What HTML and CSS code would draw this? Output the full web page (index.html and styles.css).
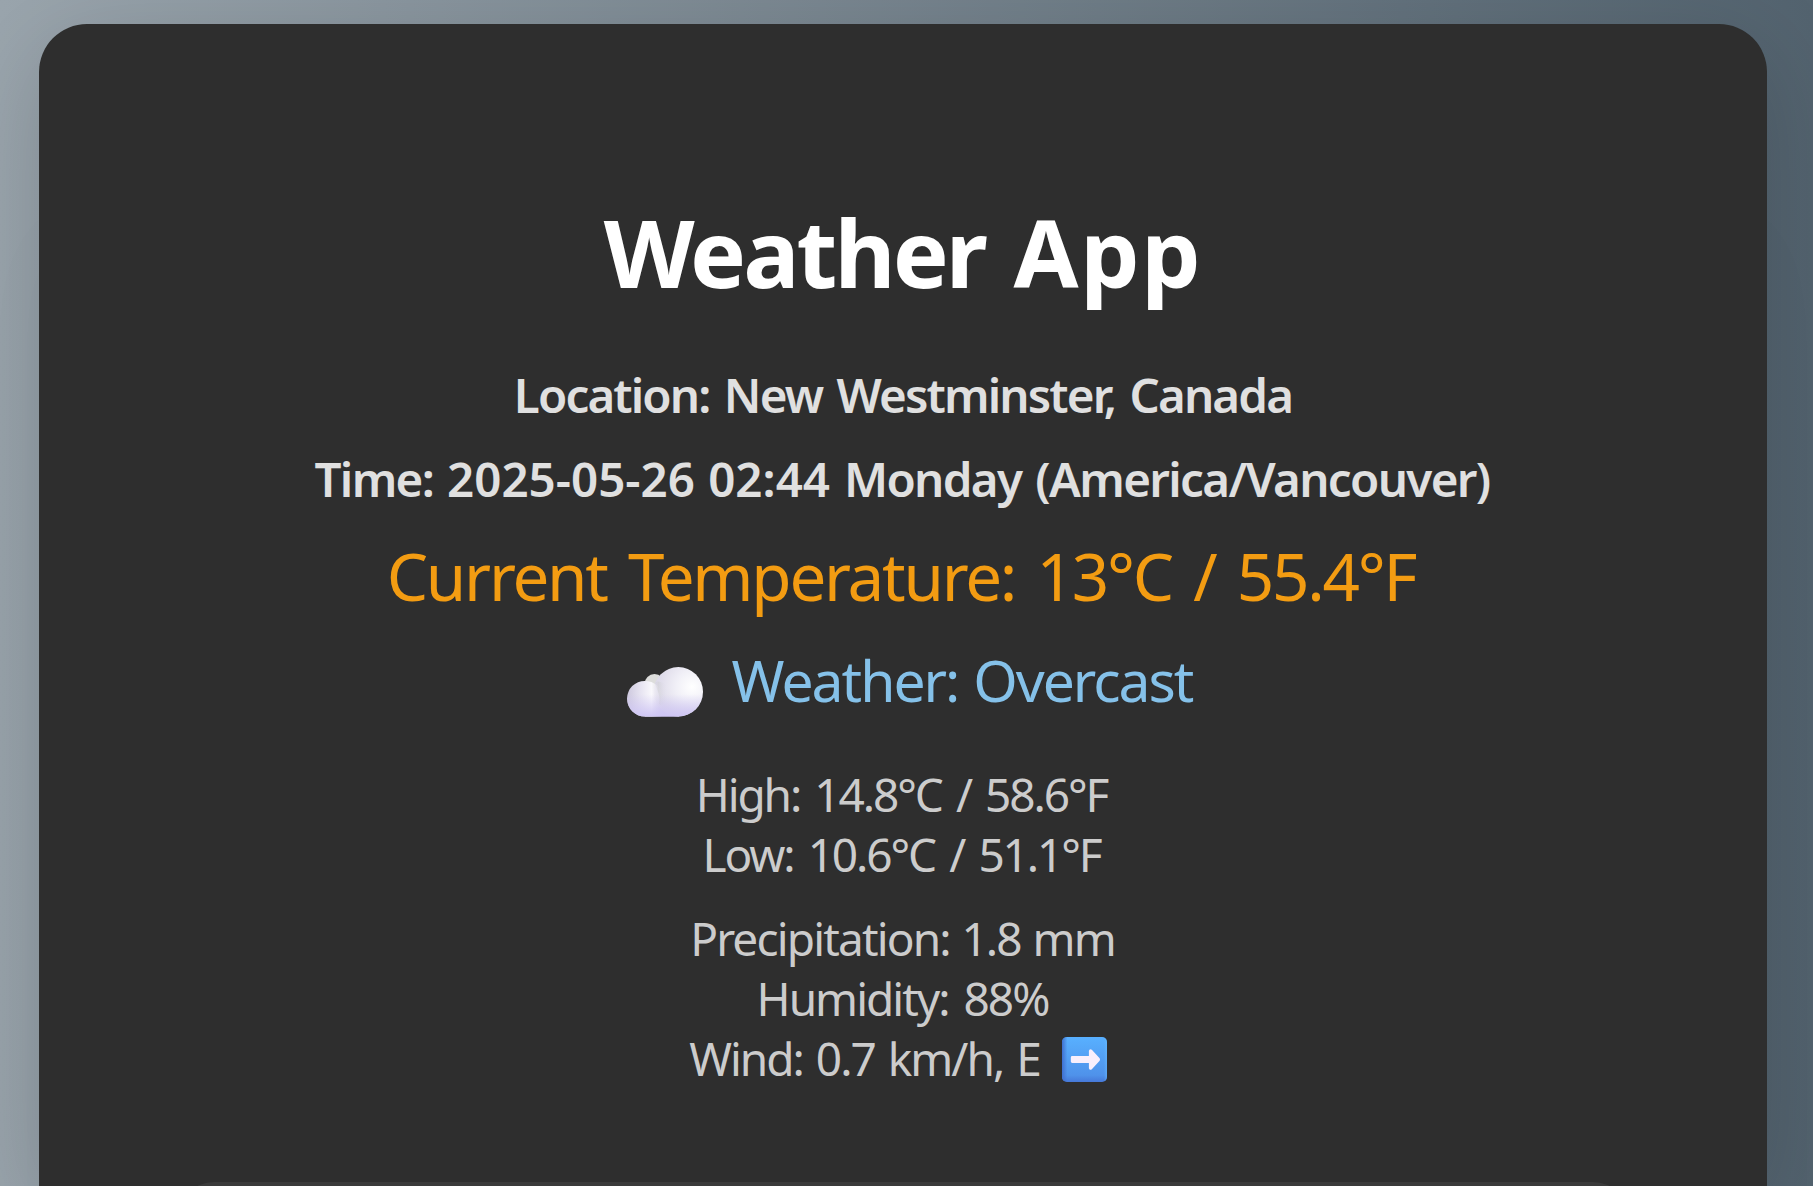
FILE: index.html
```html
<!DOCTYPE html>
<html lang="en">
<head>
<meta charset="utf-8">
<title>Weather App</title>
<link rel="stylesheet" href="styles.css">
</head>
<body>
<main class="card">
  <h1 class="title">Weather <span class="app">App</span></h1>
  <p class="location">Location: New Westminster, Canada</p>
  <p class="time">Time: <span class="digits">2025-05-26 02:44</span> Monday (America/Vancouver)</p>
  <p class="temperature">Current Temperature: 13°C / 55.4°F</p>
  <div class="conditions">
    <svg class="cloud" viewBox="0 0 76 50" aria-hidden="true">
      <defs>
        <linearGradient id="base" x1="0" y1="0" x2="0" y2="1">
          <stop offset="0" stop-color="#e2e2e4"/><stop offset=".5" stop-color="#e2dfef"/><stop offset="1" stop-color="#cdc4f0"/>
        </linearGradient>
        <radialGradient id="big" cx=".78" cy=".4" r=".8">
          <stop offset="0" stop-color="#fff"/><stop offset=".4" stop-color="#f1f0f7"/><stop offset=".8" stop-color="#e0ddeb"/><stop offset="1" stop-color="#dad6e8"/>
        </radialGradient>
        <linearGradient id="small" x1="0" y1="0" x2="1" y2="0">
          <stop offset="0" stop-color="#cdc8de"/><stop offset=".35" stop-color="#e5e2f0"/><stop offset=".68" stop-color="#f9f8fc"/><stop offset="1" stop-color="#e4e2ec" stop-opacity="0"/>
        </linearGradient>
        <linearGradient id="fade" x1="0" y1="0" x2="0" y2="1">
          <stop offset=".55" stop-color="#cfc6f4" stop-opacity="0"/><stop offset="1" stop-color="#cfc6f4"/>
        </linearGradient>
        <linearGradient id="crease" x1="0" y1="0" x2="1" y2="0">
          <stop offset="0" stop-color="#d2d2d4" stop-opacity="0"/><stop offset=".35" stop-color="#d2d2d6"/><stop offset="1" stop-color="#e4e2ee" stop-opacity="0"/>
        </linearGradient>
      </defs>
      <circle cx="27.500" cy="17" r="10" fill="#dddddc"/>
      <path d="M18 49.500V30L32 16H52V49.500Z" fill="url(#base)"/>
      <circle cx="51.300" cy="24.700" r="24.700" fill="url(#big)"/>
      <path d="M17.800 13.900C27 13.900 35 20 36 30 36.500 38 36 49.500 34 49.500H17.800A17.800 17.800 0 0 1 17.800 13.900Z" fill="url(#small)"/>
      <path d="M27 16Q31 12 40 18V36Q36 41 32 37 34 27 27 16Z" fill="url(#crease)" opacity=".6"/>
      <path d="M17.800 13.900C25 13.900 29 17 32 22 36 7 43 0 51.300 0A24.700 24.700 0 0 1 51.300 49.500H17.800A17.800 17.800 0 0 1 17.800 13.900Z" fill="url(#fade)"/>
    </svg>
    <span class="summary">Weather: Overcast</span>
  </div>
  <div class="details range">
    <p class="high">High: 14.8°C / 58.6°F</p>
    <p class="low">Low: 10.6°C / 51.1°F</p>
  </div>
  <div class="details extra">
    <p class="precipitation">Precipitation: 1.8 mm</p>
    <p class="humidity">Humidity: 88%</p>
    <p class="wind"><span>Wind: 0.7 km/h, E</span>
      <svg class="arrow" viewBox="0 0 46 46" aria-hidden="true">
        <defs>
          <linearGradient id="tile" x1="0" y1="0" x2="0" y2="1">
            <stop offset="0" stop-color="#58b0ff"/><stop offset=".85" stop-color="#4f92ea"/><stop offset="1" stop-color="#4678d8"/>
          </linearGradient>
          <linearGradient id="edge" x1="0" y1="0" x2="1" y2="0">
            <stop offset="0" stop-color="#3f6fd0"/><stop offset=".12" stop-color="#3f6fd0" stop-opacity="0"/><stop offset=".93" stop-color="#69bcff" stop-opacity="0"/><stop offset="1" stop-color="#69bcff" stop-opacity=".5"/>
          </linearGradient>
        </defs>
        <rect width="46" height="46" rx="5" fill="url(#tile)"/>
        <rect width="46" height="46" rx="5" fill="url(#edge)"/>
        <path d="M10.500 19.500H27.500V14Q28.200 11.500 30.500 13L38.500 21.800Q39.200 23 38.500 24.200L30.500 33Q28.200 34.500 27.500 32V26.500H10.500Q9 26.500 9 25V21Q9 19.500 10.500 19.500Z" fill="#f8effc"/>
      </svg>
    </p>
  </div>
  <section class="forecast"></section>
</main>
</body>
</html>
```
FILE: styles.css
```css
* { box-sizing: border-box; }
html { height: 100%; overflow: hidden; }
body {
  margin: 0;
  height: 100%;
  overflow: hidden;
  padding: 24px 46px 0 39px;
  background: linear-gradient(90deg, #9aa5ad, #53636f);
  font-family: "Noto Sans", "Open Sans", sans-serif;
  text-align: center;
}
p, h1 { margin: 0; white-space: nowrap; }
.card {
  height: 1162px;
  overflow: hidden;
  padding: 167px 138.500px 0;
  border-radius: 48px 48px 0 0;
  background: #2e2e2e;
  box-shadow: 0 24px 96px rgba(0, 0, 0, .16), 0 200px 96px rgba(0, 0, 0, .02);
}
.title {
  height: 168px;
  line-height: 122px;
  font-size: 94px;
  font-weight: 700;
  letter-spacing: -2.900px;
  word-spacing: 7px;
  color: #fff;
}
.app { letter-spacing: 1.600px; }
.location, .time {
  height: 84px;
  line-height: 72px;
  font-size: 47.500px;
  font-weight: 600;
  color: #e0e0e0;
}
.location { letter-spacing: -1.850px; word-spacing: 3.800px; }
.time { padding-right: 2px; letter-spacing: -1.650px; word-spacing: 3.200px; }
.digits { letter-spacing: 0; word-spacing: 1px; }
.temperature {
  height: 112px;
  padding-right: 4px;
  line-height: 98px;
  font-size: 65.500px;
  letter-spacing: -2.250px;
  word-spacing: 6.600px;
  color: #f39c12;
}
.conditions {
  display: flex;
  justify-content: center;
  align-items: flex-start;
  gap: 29px;
  height: 125px;
  padding-left: 13px;
  line-height: 82px;
  font-size: 57px;
  letter-spacing: -2px;
  word-spacing: 2px;
  color: #85c1e9;
}
.cloud { width: 76px; height: 50px; margin-top: 28px; }
.details {
  line-height: 60px;
  font-size: 46px;
  letter-spacing: -2.100px;
  word-spacing: 4.300px;
  color: #ccc;
}
.range { padding-right: 3px; }
.extra { margin-top: 24px; padding-right: 1px; }
.precipitation { letter-spacing: -1.850px; word-spacing: 1.600px; }
.humidity { letter-spacing: -2px; word-spacing: 5px; }
.wind {
  display: flex;
  justify-content: center;
  gap: 22px;
  padding-right: 9px;
  letter-spacing: -2px;
  word-spacing: 3px;
}
.arrow { width: 45px; height: 45px; margin-top: 9px; }
.forecast {
  height: 300px;
  margin-top: 94px;
  border-radius: 36px;
  background: #3a3a3a;
}
```
